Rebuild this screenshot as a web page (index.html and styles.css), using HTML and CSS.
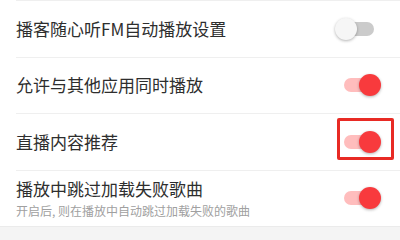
FILE: index.html
```html
<!DOCTYPE html>
<html lang="zh">
<head>
<meta charset="utf-8">
<link rel="stylesheet" href="styles.css">
</head>
<body>
<div class="list">
  <div class="row">
    <div class="label"><div class="title">播客随心听FM自动播放设置</div></div>
    <div class="switch"><div class="track"></div><div class="thumb"></div></div>
  </div>
  <div class="row">
    <div class="label"><div class="title">允许与其他应用同时播放</div></div>
    <div class="switch on"><div class="track"></div><div class="thumb"></div></div>
  </div>
  <div class="row">
    <div class="label"><div class="title">直播内容推荐</div></div>
    <div class="switch on"><div class="track"></div><div class="thumb"></div></div>
    <div class="highlight"></div>
  </div>
  <div class="row">
    <div class="label">
      <div class="title">播放中跳过加载失败歌曲</div>
      <div class="sub">开启后, 则在播放中自动跳过加载失败的歌曲</div>
    </div>
    <div class="switch on"><div class="track"></div><div class="thumb"></div></div>
  </div>
</div>
<div class="footer"></div>
</body>
</html>
```

FILE: styles.css
```css
html, body {
  margin: 0;
  padding: 0;
  background: #ffffff;
  font-family: "Noto Sans CJK SC", "Noto Sans", sans-serif;
}
.list {
  background: #ffffff;
}
.row {
  position: relative;
  box-sizing: border-box;
  height: 56.5px;
  margin-left: 16px;
  border-top: 1px solid #efefef;
  display: flex;
  align-items: center;
  justify-content: space-between;
}
.label {
  display: flex;
  flex-direction: column;
  gap: 3px;
}
.title {
  font-size: 17px;
  line-height: 22px;
  color: #2e2e2e;
}
.sub {
  font-size: 12px;
  line-height: 16px;
  color: #a0a0a0;
}
.switch {
  position: relative;
  width: 48px;
  height: 24px;
  margin-right: 18px;
}
.track {
  position: absolute;
  left: 10px;
  top: 5px;
  width: 30px;
  height: 14px;
  border-radius: 7px;
  background: #cbcbcb;
}
.thumb {
  position: absolute;
  left: 1px;
  top: 1px;
  width: 22px;
  height: 22px;
  border-radius: 50%;
  background: #f6f6f6;
  box-shadow: 0 1px 3px rgba(0,0,0,0.3);
}
.switch.on .track {
  background: #ffbdbd;
}
.switch.on .thumb {
  left: 25px;
  background: #f83a3d;
}
.highlight {
  position: absolute;
  left: 321px;
  top: 4px;
  width: 51px;
  height: 36px;
  border: 3px solid #e82a24;
  border-radius: 2px;
}
.footer {
  height: 20px;
  border-top: 1px solid #ebebeb;
  background: #f4f4f4;
}
```
